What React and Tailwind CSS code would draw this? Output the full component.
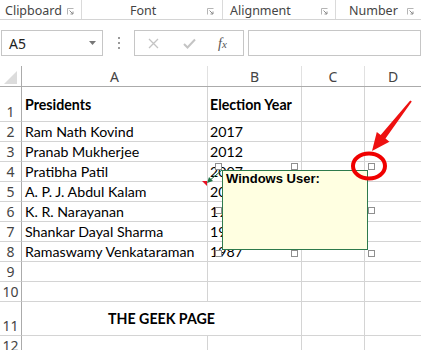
import React from 'react';

const sheetFont = "font-['Lato','Carlito','Liberation_Sans',sans-serif]";
const uiFont = "font-['Noto_Sans','Open_Sans',sans-serif]";

const rows = [
  { n: '1', h: 'h-[35px]', a: 'Presidents', b: 'Election Year', bold: true, center: true },
  { n: '2', h: 'h-[20px]', a: 'Ram Nath Kovind', b: '2017' },
  { n: '3', h: 'h-[20px]', a: 'Pranab Mukherjee', b: '2012' },
  { n: '4', h: 'h-[20px]', a: 'Pratibha Patil', b: '2007' },
  { n: '5', h: 'h-[20px]', a: 'A. P. J. Abdul Kalam', b: '2002' },
  { n: '6', h: 'h-[20px]', a: 'K. R. Narayanan', b: '1997' },
  { n: '7', h: 'h-[20px]', a: 'Shankar Dayal Sharma', b: '1992' },
  { n: '8', h: 'h-[20px]', a: 'Ramaswamy Venkataraman', b: '1987' },
  { n: '9', h: 'h-[20px]', a: '', b: '' },
  { n: '10', h: 'h-[20px]', a: '', b: '' },
];

const Launcher = () => (
  <svg width="7" height="7" viewBox="0 0 7 7" className="shrink-0">
    <path d="M0.5 6.5V0.5H6.5" fill="none" stroke="#b5b5b5" strokeWidth="1" />
    <path d="M2.5 2.5L6 6M6 3.5V6H3.5" fill="none" stroke="#8d8d8d" strokeWidth="1" />
  </svg>
);

const Handle = ({ className }) => (
  <div className={`absolute w-[7px] h-[7px] border border-[#8f8f8f] bg-white ${className}`} />
);

const RowHeader = ({ n, h }) => (
  <div className={`${h} w-[22px] shrink-0 border-r border-b border-r-[#ababab] border-b-[#d4d4d4] flex items-end justify-center text-[14px] leading-[19px] text-[#444] ${uiFont}`}>
    {n}
  </div>
);

export default function App() {
  return (
    <div className="relative w-[421px] h-[350px] overflow-hidden bg-white">
      {/* ribbon group labels */}
      <div className={`flex h-[20px] border-b border-[#d4d4d4] text-[12.5px] leading-[20px] text-[#444] ${uiFont}`}>
        <div className="w-[82px] shrink-0 flex items-center border-r border-[#dadada] pl-[5px] pr-[7px]">
          <span className="pt-[2px]">Clipboard</span>
          <span className="ml-auto pt-[4px]"><Launcher /></span>
        </div>
        <div className="w-[141px] shrink-0 flex items-center border-r border-[#dadada] pl-[48px] pr-[8px]">
          <span className="pt-[2px]">Font</span>
          <span className="ml-auto pt-[4px]"><Launcher /></span>
        </div>
        <div className="w-[113px] shrink-0 flex items-center border-r border-[#dadada] pl-[7px] pr-[7px]">
          <span className="pt-[2px]">Alignment</span>
          <span className="ml-auto pt-[4px]"><Launcher /></span>
        </div>
        <div className="flex-1 flex items-center pl-[13px] pr-[7px]">
          <span className="pt-[2px]">Number</span>
          <span className="ml-auto pt-[4px]"><Launcher /></span>
        </div>
      </div>

      {/* formula bar */}
      <div className={`flex items-center h-[26px] mt-[10px] pl-[1px] ${uiFont}`}>
        <div className="w-[102px] h-full border border-[#c6c6c6] flex items-center pl-[7px] pr-[5px] text-[14px] text-[#222]">
          <span>A5</span>
          <svg width="7" height="4" viewBox="0 0 7 4" className="ml-auto mr-[1px]">
            <path d="M0 0H7L3.5 4Z" fill="#777" />
          </svg>
        </div>
        <div className="w-[31px] flex flex-col items-center gap-[3px]">
          <span className="w-[2px] h-[2px] bg-[#9a9a9a]" />
          <span className="w-[2px] h-[2px] bg-[#9a9a9a]" />
          <span className="w-[2px] h-[2px] bg-[#9a9a9a]" />
        </div>
        <div className="w-[110px] h-full border border-[#c6c6c6] flex items-center pl-[13px]">
          <svg width="11" height="11" viewBox="0 0 11 11">
            <path d="M1 1L10 10M10 1L1 10" stroke="#c4c4c4" strokeWidth="1.3" />
          </svg>
          <svg width="13" height="11" viewBox="0 0 13 11" className="ml-[24px]">
            <path d="M1 6L4.5 9.5L12 1.5" fill="none" stroke="#c4c4c4" strokeWidth="2" />
          </svg>
          <span className="ml-[22px] text-[14px] italic text-[#555] font-['Liberation_Serif',serif]">
            f<span className="text-[11px]">x</span>
          </span>
        </div>
        <div className="ml-[4px] flex-1 h-full border border-[#c6c6c6]" />
      </div>

      {/* sheet */}
      <div className={`mt-[10px] ${sheetFont}`}>
        {/* column headers */}
        <div className={`flex h-[21px] border-b border-[#ababab] text-[14px] text-[#444] ${uiFont}`}>
          <div className="w-[22px] shrink-0 border-r border-[#ababab] relative">
            <svg width="13" height="13" viewBox="0 0 13 13" className="absolute left-[4px] bottom-[2px]">
              <path d="M13 0V13H0Z" fill="#dcdcdc" />
            </svg>
          </div>
          <div className="w-[186px] shrink-0 border-r border-[#e1e1e1] flex items-center justify-center">A</div>
          <div className="w-[94px] shrink-0 border-r border-[#e1e1e1] flex items-center justify-center">B</div>
          <div className="w-[63px] shrink-0 border-r border-[#e1e1e1] flex items-center justify-center">C</div>
          <div className="flex-1 flex items-center justify-center">D</div>
        </div>

        {rows.map((r) => (
          <div key={r.n} className={`flex ${r.h} text-[14.2px] text-black`}>
            <RowHeader n={r.n} h={r.h} />
            <div className={`w-[186px] shrink-0 border-r border-b border-[#d4d4d4] pl-[3px] flex ${r.center ? 'items-center' : 'items-end'} leading-[19px] ${r.bold ? 'font-bold' : ''}`}>
              {r.a}
            </div>
            <div className={`w-[94px] shrink-0 border-r border-b border-[#d4d4d4] pl-[2px] flex ${r.center ? 'items-center' : 'items-end'} leading-[19px] ${r.bold ? 'font-bold' : ''}`}>
              {r.b}
            </div>
            <div className="w-[63px] shrink-0 border-r border-b border-[#d4d4d4]" />
            <div className="flex-1 border-b border-[#d4d4d4]" />
          </div>
        ))}

        <div className="flex h-[34px] text-[14.2px] text-black">
          <RowHeader n="11" h="h-[34px]" />
          <div className="w-[280px] shrink-0 border-r border-b border-[#d4d4d4] flex items-center justify-center font-bold">
            THE GEEK PAGE
          </div>
          <div className="w-[63px] shrink-0 border-r border-b border-[#d4d4d4]" />
          <div className="flex-1 border-b border-[#d4d4d4]" />
        </div>

        <div className="flex h-[20px]">
          <RowHeader n="12" h="h-[20px]" />
          <div className="w-[186px] shrink-0 border-r border-b border-[#d4d4d4]" />
          <div className="w-[94px] shrink-0 border-r border-b border-[#d4d4d4]" />
          <div className="w-[63px] shrink-0 border-r border-b border-[#d4d4d4]" />
          <div className="flex-1 border-b border-[#d4d4d4]" />
        </div>
      </div>

      {/* comment indicator + connector */}
      <svg width="421" height="350" className="absolute inset-0 pointer-events-none">
        <path d="M202 181H207V186Z" fill="#e81123" />
        <line x1="209" y1="181" x2="222" y2="170" stroke="#217346" strokeWidth="1" />
        <path d="M207 183L209 177L213 181Z" fill="#217346" />
      </svg>

      {/* comment box */}
      <div className="absolute left-[222px] top-[170px] w-[146px] h-[80px] border border-[#2e7a4c] bg-[#ffffe1] px-[3px]">
        <span className="block text-[13px] leading-[16px] font-bold text-black font-['Liberation_Sans','Tahoma',sans-serif]">Windows User:</span>
      </div>

      {/* selection handles */}
      <Handle className="left-[215px] top-[163px]" />
      <Handle className="left-[291px] top-[163px]" />
      <Handle className="left-[368px] top-[163px]" />
      <Handle className="left-[215px] top-[207px]" />
      <Handle className="left-[368px] top-[207px]" />
      <Handle className="left-[215px] top-[250px]" />
      <Handle className="left-[291px] top-[250px]" />
      <Handle className="left-[368px] top-[250px]" />

      {/* red annotation */}
      <svg width="421" height="350" className="absolute inset-0 pointer-events-none">
        <ellipse cx="369" cy="166" rx="16" ry="12.5" fill="none" stroke="#f00000" strokeWidth="4" />
        <polygon
          points="411.8,101.6 385.5,138.6 389.4,141.7 372,151 376.8,131.9 380.7,134.9 410.2,100.4"
          fill="#ee1111"
        />
      </svg>
    </div>
  );
}
